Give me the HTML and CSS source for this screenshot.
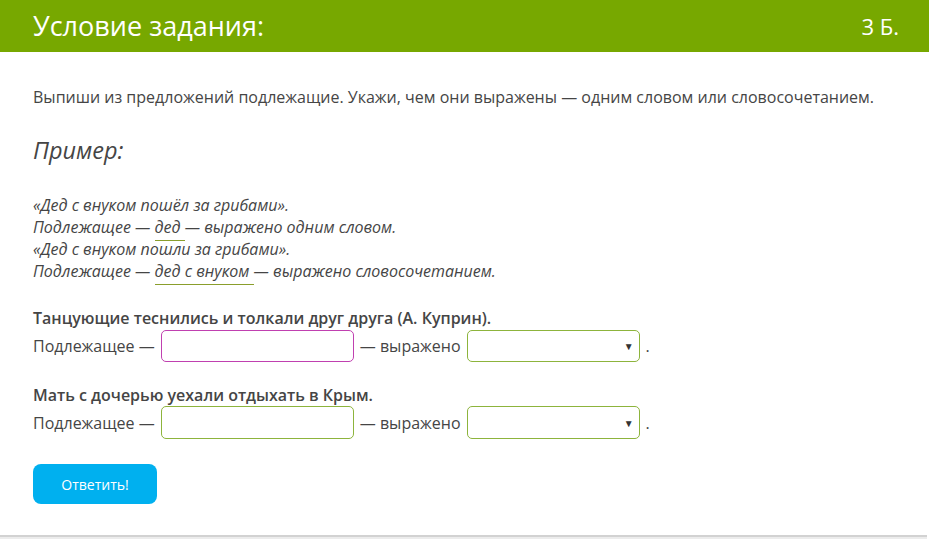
FILE: index.html
```html
<!DOCTYPE html>
<html lang="ru">
<head>
<meta charset="utf-8">
<link rel="stylesheet" href="styles.css">
</head>
<body>
<div class="page">
  <header class="head">
    <h1 class="title">Условие задания:</h1>
    <span class="points">3 Б.</span>
  </header>
  <main class="content">
    <p class="task">Выпиши из предложений подлежащие. Укажи, чем они выражены — одним словом или словосочетанием.</p>
    <h2 class="example-title">Пример:</h2>
    <div class="example">
      <div>«Дед с внуком пошёл за грибами».</div>
      <div>Подлежащее — <span class="ul">дед </span>— выражено одним словом.</div>
      <div>«Дед с внуком пошли за грибами».</div>
      <div>Подлежащее — <span class="ul">дед с внуком </span>— выражено словосочетанием.</div>
    </div>
    <div class="item">
      <div class="sentence">Танцующие теснились и толкали друг друга (А. Куприн).</div>
      <div class="row">
        <span>Подлежащее —</span>
        <span class="input focus"></span>
        <span>— выражено</span>
        <span class="select"><span class="arrow">▼</span></span>
        <span>.</span>
      </div>
    </div>
    <div class="item second">
      <div class="sentence">Мать с дочерью уехали отдыхать в Крым.</div>
      <div class="row">
        <span>Подлежащее —</span>
        <span class="input"></span>
        <span>— выражено</span>
        <span class="select"><span class="arrow">▼</span></span>
        <span>.</span>
      </div>
    </div>
    <button class="btn">Ответить!</button>
  </main>
  <div class="footer-line"></div>
</div>
</body>
</html>
```
FILE: styles.css
```css
* { box-sizing: border-box; }
html, body { margin: 0; padding: 0; background: #fff; }
body {
  font-family: "Open Sans", "Noto Sans", sans-serif;
  color: #454545;
  width: 929px;
  height: 539px;
  overflow: hidden;
}
.page { display: flex; flex-direction: column; height: 539px; }
.head {
  height: 52px;
  flex-shrink: 0;
  background: #77a800;
  display: flex;
  align-items: center;
  justify-content: space-between;
  padding: 0 30px 0 33px;
  color: #fff;
}
.title { margin: 0; font-weight: 400; font-size: 27px; line-height: 36px; }
.points { font-size: 22px; }
.content { flex: 1; padding: 0 33px; }
.task { margin: 34px 0 0; font-size: 16px; line-height: 22px; }
.example-title {
  margin: 27px 0 0;
  font-style: italic;
  font-weight: 400;
  font-size: 23.5px;
  line-height: 30px;
}
.example {
  margin-top: 29px;
  font-style: italic;
  font-size: 16px;
  line-height: 22px;
}
.ul { border-bottom: 1px solid #8a9e2c; padding-bottom: 2px; }
.item { margin-top: 25px; }
.item.second { margin-top: 22px; }
.sentence { font-weight: 600; font-size: 16px; line-height: 22px; }
.row {
  display: flex;
  align-items: center;
  gap: 6px;
  font-size: 16px;
  margin-top: 1px;
}
.second .row { margin-top: 0; }
.input {
  width: 193px;
  height: 32px;
  border: 1px solid #8db43c;
  border-radius: 5px;
}
.second .input, .second .select { height: 33px; }
.input.focus { border-color: #c040b0; }
.select {
  width: 173px;
  height: 32px;
  border: 1px solid #8db43c;
  border-radius: 5px;
  display: flex;
  align-items: center;
  justify-content: flex-end;
  padding-right: 5px;
}
.arrow { font-size: 10px; color: #333; }
.btn {
  display: block;
  margin-top: 25px;
  width: 124px;
  height: 40px;
  border: none;
  border-radius: 8px;
  background: #00b0ef;
  color: #fff;
  font-family: "Open Sans", sans-serif;
  font-size: 14px;
}
.footer-line {
  height: 4px;
  flex-shrink: 0;
  border-top: 2px solid #d2d2d2;
  background: #ececec;
  margin-right: 2px;
}
```
